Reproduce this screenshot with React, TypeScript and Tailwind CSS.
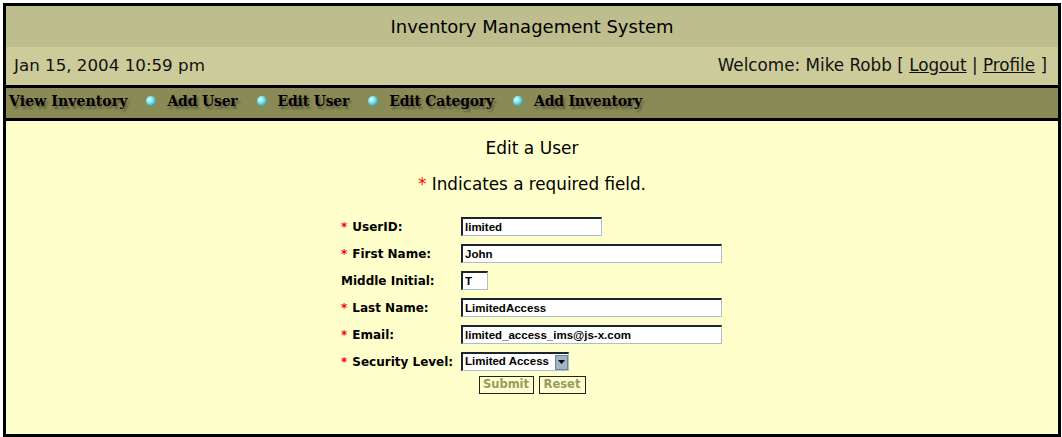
import React from "react";

const Bullet = () => (
  <span
    className="inline-block w-[10px] h-[10px] rounded-full"
    style={{ background: "radial-gradient(circle at 35% 35%, #e8ffff 0%, #7fe6ee 35%, #2a9aa8 80%, #1f6f7a 100%)" }}
  />
);

const NavItem = ({ label, wide }: { label: string; wide?: boolean }) => (
  <span
    className={`text-[14px] font-bold text-black ${wide ? "tracking-[0.1px]" : "tracking-[-0.2px]"}`}
    style={{ fontFamily: '"DejaVu Serif", serif', textShadow: "2px 3px 2px rgba(60,60,40,0.55)" }}
  >
    {label}
  </span>
);

const Req = () => <span className="text-[#ff0000] mr-[5px]">*</span>;

const inputCls =
  "h-[19px] bg-white border-t-2 border-l-2 border-b border-r border-t-[#1c2430] border-l-[#1c2430] border-b-[#a9bfd0] border-r-[#a9bfd0] px-[2px] py-0 text-[11.5px] leading-[15px] font-bold text-black outline-none";

const inputFont = { fontFamily: '"Liberation Sans", Arial, sans-serif' };

const Row = ({ label, req, children }: { label: string; req?: boolean; children: React.ReactNode }) => (
  <div className="flex items-center h-[27px]">
    <div className="w-[120px] text-[12px] font-bold text-black leading-[19px] pt-[2px]">
      {req && <Req />}
      {label}
    </div>
    {children}
  </div>
);

const Sep = () => (
  <span className="ml-[19px] mr-[11px] flex">
    <Bullet />
  </span>
);

export default function App() {
  return (
    <div className="w-[1062px] h-[437px] bg-white pt-[3px] pl-[3px]" style={{ fontFamily: '"DejaVu Sans", Verdana, sans-serif' }}>
      <div className="w-[1058px] h-[434px] border-[3px] border-black flex flex-col bg-[#ffffcc]">
        <div className="h-[41px] bg-[#bdbd8d] flex items-center justify-center text-[18px] text-black">
          Inventory Management System
        </div>
        <div className="h-[38px] bg-[#cccc9a] flex items-center justify-between pl-[8px] pr-[11px] text-[#111]">
          <span className="text-[16.7px]">Jan 15, 2004 10:59 pm</span>
          <span className="text-[16.8px]">
            Welcome: Mike Robb [ <span className="underline">Logout</span> | <span className="underline">Profile</span> ]
          </span>
        </div>
        <div className="h-[36px] border-y-[3px] border-black bg-[#8a8a57] flex items-center pl-[3px] pb-[4px]">
          <NavItem label="View Inventory" wide />
          <Sep />
          <NavItem label="Add User" />
          <Sep />
          <NavItem label="Edit User" />
          <Sep />
          <NavItem label="Edit Category" />
          <Sep />
          <NavItem label="Add Inventory" />
        </div>
        <div className="flex-1 flex flex-col items-center pt-[16px]">
          <div className="text-[17px] text-black leading-[22px]">Edit a User</div>
          <div className="text-[16.8px] text-black mt-[14px] leading-[22px]">
            <span className="text-[#ff0000]">*</span> Indicates a required field.
          </div>
          <div className="mt-[18px] flex flex-col w-[382px]">
            <Row label="UserID:" req>
              <input className={`${inputCls} w-[141px]`} defaultValue="limited" style={inputFont} />
            </Row>
            <Row label="First Name:" req>
              <input className={`${inputCls} w-[261px]`} defaultValue="John" style={inputFont} />
            </Row>
            <Row label="Middle Initial:">
              <input className={`${inputCls} w-[27px]`} defaultValue="T" style={inputFont} />
            </Row>
            <Row label="Last Name:" req>
              <input className={`${inputCls} w-[261px]`} defaultValue="LimitedAccess" style={inputFont} />
            </Row>
            <Row label="Email:" req>
              <input className={`${inputCls} w-[261px]`} defaultValue="limited_access_ims@js-x.com" style={inputFont} />
            </Row>
            <Row label="Security Level:" req>
              <div
                className="h-[19px] w-[108px] bg-white border-t-2 border-l-2 border-b border-r border-t-[#1c2430] border-l-[#1c2430] border-b-[#a9bfd0] border-r-[#a9bfd0] flex items-center text-[11.5px] font-bold text-black"
                style={inputFont}
              >
                <span className="flex-1 pl-[2px] whitespace-nowrap overflow-hidden">Limited Access</span>
                <span className="w-[13px] h-[15px] bg-[#9fb4c4] border border-[#6d8597] flex items-center justify-center shrink-0">
                  <svg width="7" height="4" viewBox="0 0 7 4"><path d="M0 0h7L3.5 4z" fill="#000" /></svg>
                </span>
              </div>
            </Row>
          </div>
          <div className="flex gap-[5px] mt-[1px]">
            <button className="h-[18px] w-[55px] border border-[#222] bg-[#ffffcc] text-[11.5px] font-bold text-[#999966] leading-none">Submit</button>
            <button className="h-[18px] w-[47px] border border-[#222] bg-[#ffffcc] text-[11.5px] font-bold text-[#999966] leading-none">Reset</button>
          </div>
        </div>
      </div>
    </div>
  );
}
